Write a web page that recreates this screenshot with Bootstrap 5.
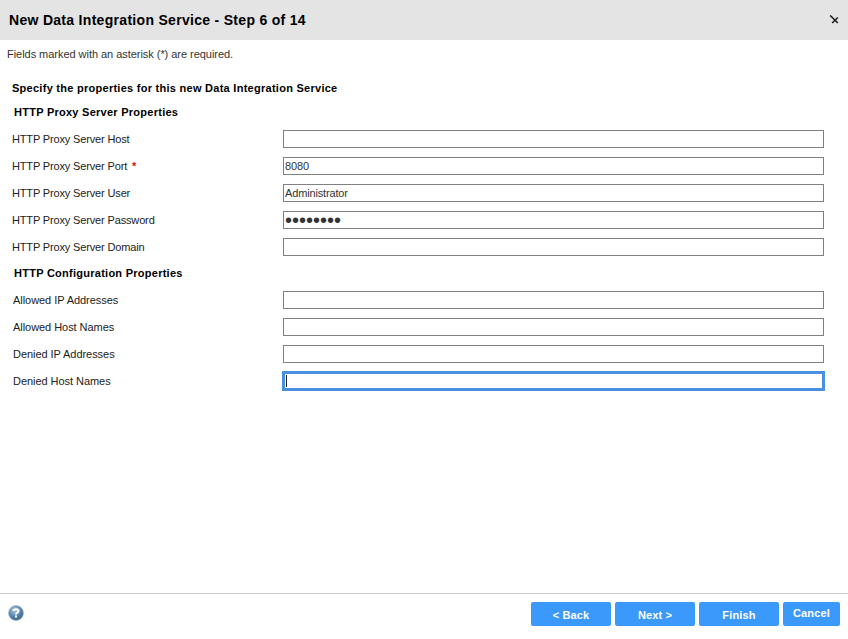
<!DOCTYPE html>
<html lang="en">
<head>
  <meta charset="UTF-8">
  <meta name="viewport" content="width=device-width, initial-scale=1.0">
  <title>New Data Integration Service</title>
  <link href="https://cdn.jsdelivr.net/npm/bootstrap@5.3.0/dist/css/bootstrap.min.css" rel="stylesheet">
  <style>
    body {
      font-family: "Liberation Sans", Arial, sans-serif;
      font-size: 11px;
      color: #222;
    }
    .wiz-head {
      height: 40px;
      background-color: #e4e4e4;
      padding: 0 9px;
    }
    .wiz-head h1 {
      font-size: 14px;
      font-weight: 700;
      letter-spacing: .3px;
      color: #000;
      margin: 0;
    }
    .wiz-note {
      padding: 6px 7px 0;
      height: 38px;
      font-size: 11px;
      letter-spacing: -.04px;
      color: #333;
    }
    .wiz-form {
      padding: 0 24px 0 12px;
    }
    .wiz-title {
      font-weight: 700;
      color: #000;
      height: 25px;
      line-height: 20px;
      margin: 0;
      font-size: 11px;
      letter-spacing: .27px;
    }
    .wiz-section {
      font-weight: 700;
      color: #000;
      font-size: 11px;
      height: 23px;
      line-height: 18px;
      padding-left: 2px;
      margin: 0;
      letter-spacing: .26px;
    }
    .wiz-section-next {
      margin-top: 3px;
    }
    .wiz-row {
      height: 27px;
    }
    .wiz-row label {
      width: 271px;
      flex: none;
      margin: 0;
      color: #222;
      letter-spacing: -.15px;
    }
    .wiz-row-inset label {
      padding-left: 1px;
      letter-spacing: -.05px;
    }
    .wiz-row .form-control {
      height: 18px;
      min-height: 0;
      margin-bottom: 2px;
      padding: 0 1px;
      font-size: 11px;
      line-height: 16px;
      letter-spacing: -.15px;
      color: #333;
      border: 1px solid #808080;
      border-radius: 0;
    }
    .wiz-row .form-control[type="password"] {
      font-size: 20px;
      letter-spacing: 0;
      padding: 2px 0 0 1px;
    }
    .wiz-row .wiz-focused {
      border: 1px solid #4a90e2;
      box-shadow: 0 0 0 1px #4a90e2, inset 0 0 0 1px #4a90e2;
      background: #fff linear-gradient(#222, #222) no-repeat 2px center / 1px 12px;
    }
    .wiz-req {
      color: #e01010;
      font-weight: 700;
      margin-left: 2px;
    }
    .wiz-foot {
      height: 46px;
      border-top: 1px solid #ccc;
      padding: 8px 8px 0;
    }
    .wiz-help {
      margin-top: 3px;
    }
    .wiz-btn {
      height: 24px;
      width: 80px;
      padding: 2px 0 0;
      font-size: 11px;
      font-weight: 700;
      letter-spacing: .15px;
      color: #fff;
      background-color: #3b99fc;
      border: 0;
      border-radius: 2px;
    }
    .wiz-btn-cancel {
      width: 57px;
      padding: 0 0 2px;
    }
  </style>
</head>
<body class="d-flex flex-column vh-100 overflow-hidden">
  <div class="wiz-head d-flex align-items-center justify-content-between flex-shrink-0">
    <h1>New Data Integration Service - Step 6 of 14</h1>
    <svg width="10" height="10" viewBox="0 0 10 10" aria-label="Close">
      <path d="M1.2 .5 8.8 8M8.8 2.5 3.2 8" stroke="#222" stroke-width="1.7" fill="none"/>
    </svg>
  </div>

  <div class="wiz-note flex-shrink-0">Fields marked with an asterisk (*) are required.</div>

  <form class="wiz-form flex-grow-1">
    <p class="wiz-title">Specify the properties for this new Data Integration Service</p>

    <p class="wiz-section">HTTP Proxy Server Properties</p>
    <div class="wiz-row d-flex align-items-center">
      <label for="proxyHost">HTTP Proxy Server Host</label>
      <input type="text" class="form-control" id="proxyHost">
    </div>
    <div class="wiz-row d-flex align-items-center">
      <label for="proxyPort">HTTP Proxy Server Port <span class="wiz-req">*</span></label>
      <input type="text" class="form-control" id="proxyPort" value="8080">
    </div>
    <div class="wiz-row d-flex align-items-center">
      <label for="proxyUser">HTTP Proxy Server User</label>
      <input type="text" class="form-control" id="proxyUser" value="Administrator">
    </div>
    <div class="wiz-row d-flex align-items-center">
      <label for="proxyPassword">HTTP Proxy Server Password</label>
      <input type="password" class="form-control" id="proxyPassword" value="password">
    </div>
    <div class="wiz-row d-flex align-items-center">
      <label for="proxyDomain">HTTP Proxy Server Domain</label>
      <input type="text" class="form-control" id="proxyDomain">
    </div>

    <p class="wiz-section wiz-section-next">HTTP Configuration Properties</p>
    <div class="wiz-row wiz-row-inset d-flex align-items-center">
      <label for="allowedIp">Allowed IP Addresses</label>
      <input type="text" class="form-control" id="allowedIp">
    </div>
    <div class="wiz-row wiz-row-inset d-flex align-items-center">
      <label for="allowedHosts">Allowed Host Names</label>
      <input type="text" class="form-control" id="allowedHosts">
    </div>
    <div class="wiz-row wiz-row-inset d-flex align-items-center">
      <label for="deniedIp">Denied IP Addresses</label>
      <input type="text" class="form-control" id="deniedIp">
    </div>
    <div class="wiz-row wiz-row-inset d-flex align-items-center">
      <label for="deniedHosts">Denied Host Names</label>
      <input type="text" class="form-control wiz-focused" id="deniedHosts">
    </div>
  </form>

  <div class="wiz-foot d-flex justify-content-between flex-shrink-0">
    <svg width="16" height="16" viewBox="0 0 18 18" aria-label="Help" class="wiz-help">
      <defs>
        <radialGradient id="helpFill" cx=".4" cy=".3" r=".8">
          <stop offset="0" stop-color="#a9c3da"/>
          <stop offset=".6" stop-color="#4f7ea8"/>
          <stop offset="1" stop-color="#2d5a85"/>
        </radialGradient>
      </defs>
      <circle cx="9" cy="9" r="8.4" fill="url(#helpFill)" stroke="#9fb4c8" stroke-width=".8"/>
      <path d="M6.2 6.8C6.4 4.2 11.8 4 11.8 6.8 11.8 8.6 9 8.6 9 10.6" fill="none" stroke="#fff" stroke-width="2.2"/>
      <rect x="7.9" y="11.8" width="2.2" height="2.2" fill="#fff"/>
    </svg>
    <div class="d-flex gap-1">
      <button type="button" class="btn wiz-btn">&lt; Back</button>
      <button type="button" class="btn wiz-btn">Next &gt;</button>
      <button type="button" class="btn wiz-btn">Finish</button>
      <button type="button" class="btn wiz-btn wiz-btn-cancel">Cancel</button>
    </div>
  </div>

  <script src="https://cdn.jsdelivr.net/npm/bootstrap@5.3.0/dist/js/bootstrap.bundle.min.js"></script>
</body>
</html>
